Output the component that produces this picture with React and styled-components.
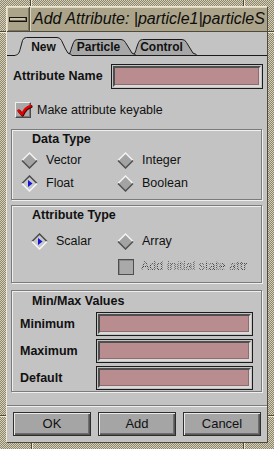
import React from 'react';
import styled, { createGlobalStyle } from 'styled-components';

const Global = createGlobalStyle`
  html, body { margin: 0; padding: 0; background: #b3ab92; }
  body { font-family: "Liberation Sans", Arial, Helvetica, sans-serif; color: #111; }
  * { box-sizing: border-box; }
`;

const Window = styled.div`
  position: relative;
  width: 274px;
  height: 449px;
  padding: 6px;
  background-color: #b3ab92;
  background-image: repeating-conic-gradient(#8e8770 0% 25%, #d6cfb7 0% 50%);
  background-size: 2px 2px;
  display: flex;
`;

const Notch = styled.div`
  position: absolute;
  ${p => p.$side === 'top' && `top: 0; left: ${p.$at}px; width: 2px; height: 6px;`}
  ${p => p.$side === 'bottom' && `bottom: 0; left: ${p.$at}px; width: 2px; height: 6px;`}
  ${p => p.$side === 'left' && `left: 0; top: ${p.$at}px; width: 6px; height: 2px;`}
  ${p => p.$side === 'right' && `right: 0; top: ${p.$at}px; width: 6px; height: 2px;`}
  background: ${p => (p.$side === 'top' || p.$side === 'bottom')
    ? 'linear-gradient(to right, #4e4a3c 50%, #eee8d4 50%)'
    : 'linear-gradient(to bottom, #4e4a3c 50%, #eee8d4 50%)'};
`;

const Inner = styled.div`
  flex: 1;
  min-width: 0;
  display: flex;
  flex-direction: column;
  border: 1px solid;
  border-color: #eee8d4 #4e4a3c #4e4a3c #eee8d4;
`;

const TitleBar = styled.div`
  height: 25px;
  flex: none;
  display: flex;
  background: #aba38a;
  border-bottom: 1px solid #4e4a3c;
`;

const MenuButton = styled.div`
  width: 23px;
  display: flex;
  align-items: center;
  justify-content: center;
  border-right: 1px solid #4e4a3c;
  box-shadow: inset 1px 1px 0 #ddd6bd, inset -1px -1px 0 #7a7460;
`;

const MenuBar = styled.div`
  width: 18px;
  height: 5px;
  border: 1px solid #16150f;
  background: #c9c2a8;
  box-shadow: inset -1px -1px 0 #6f6a57;
`;

const TitleText = styled.div`
  flex: 1;
  min-width: 0;
  padding-left: 3px;
  font-size: 16px;
  font-style: italic;
  line-height: 23px;
  white-space: nowrap;
  overflow: hidden;
  color: #0d0d0a;
  box-shadow: inset 1px 1px 0 #ddd6bd;
`;

const Client = styled.div`
  flex: 1;
  display: flex;
  flex-direction: column;
  background: #c3c3c3;
`;

const TabStrip = styled.div`
  display: flex;
  flex: none;
  height: 19px;
  margin-top: 5px;
  padding-left: 8px;
  border-bottom: 1px solid #1a1a1a;
`;

const TabBox = styled.div`
  position: relative;
  flex: none;
  width: ${p => p.$w}px;
  height: ${p => (p.$active ? 19 : 18)}px;
  margin-left: ${p => p.$ml || 0}px;
  margin-bottom: ${p => (p.$active ? -1 : 0)}px;
  z-index: ${p => p.$z};
  display: flex;
  align-items: flex-end;
  justify-content: center;
  padding-bottom: ${p => (p.$active ? 2 : 1)}px;
  padding-right: ${p => (p.$active ? 0 : 5)}px;
`;

const TabShape = styled.svg`
  position: absolute;
  left: 0;
  top: 0;
`;

const TabLabel = styled.span`
  position: relative;
  font-size: 12px;
  font-weight: bold;
  line-height: 14px;
  color: #111;
`;

function Tab({ label, w, active, ml, z }) {
  const h = active ? 19 : 18;
  const t = active ? 0 : 2;
  const hb = 18;
  const edge = `M0.5 ${hb} C3.5 ${hb} 4.5 ${hb - 3} 5.5 ${hb - 7} L7.5 ${t + 3.5} Q8.5 ${t + 0.5} 11.5 ${t + 0.5} L${w - 15} ${t + 0.5} Q${w - 12} ${t + 0.5} ${w - 10.5} ${t + 3.5} L${w - 6.5} ${hb - 6} Q${w - 4.5} ${hb - 0.5} ${w - 0.5} ${hb - 0.5}`;
  const fill = `${edge} L${w - 0.5} ${h} L0.5 ${h} Z`;
  return (
    <TabBox $w={w} $active={active} $ml={ml} $z={z}>
      <TabShape width={w} height={h} viewBox={`0 0 ${w} ${h}`}>
        <path d={fill} fill={active ? '#c3c3c3' : '#a7a7a7'} />
        <path d={edge} fill="none" stroke="#1a1a1a" strokeWidth="1" />
      </TabShape>
      <TabLabel>{label}</TabLabel>
    </TabBox>
  );
}

const Panel = styled.div`
  display: flex;
  flex-direction: column;
  padding: 0 5px 0 4px;
`;

const NameRow = styled.div`
  margin-top: 8px;
  height: 25px;
  display: flex;
  align-items: center;
  justify-content: space-between;
  padding-left: 2px;
  margin-right: -1px;
`;

const Label = styled.span`
  font-size: 12.5px;
  font-weight: ${p => (p.$bold ? 'bold' : 'normal')};
  line-height: 15px;
  white-space: nowrap;
`;

const Field = styled.div`
  width: ${p => p.$w}px;
  height: ${p => p.$h}px;
  border: 1px solid #1c1c1c;
  padding: 1px;
  background: #c3c3c3;
`;

const FieldInner = styled.div`
  width: 100%;
  height: 100%;
  background: #b98c8f;
  border: 2px solid;
  border-color: #4f4f4f #dadada #dadada #4f4f4f;
  box-shadow: inset -1px -1px 0 #8e6c6e;
`;

const TextField = ({ w, h }) => (
  <Field $w={w} $h={h}>
    <FieldInner />
  </Field>
);

const CheckRow = styled.div`
  margin-top: 13px;
  height: 16px;
  display: flex;
  align-items: center;
  gap: 6px;
  padding-left: 4px;
`;

const CheckBox = styled.div`
  width: 16px;
  height: 16px;
  flex: none;
  background: #a9a9a9;
  border: 1px solid;
  border-color: #efefef #4a4a4a #4a4a4a #efefef;
  box-shadow: inset -1px -1px 0 #7a7a7a;
  position: relative;
`;

const CheckMark = styled.svg`
  position: absolute;
  left: -1px;
  top: -1px;
`;

const DisabledBox = styled.div`
  width: 16px;
  height: 16px;
  flex: none;
  background: #a9a9a9;
  border: 1px solid #4e4e4e;
  box-shadow: inset 1px 1px 0 #8a8a8a;
`;

const Stippled = styled.span`
  font-size: 12.5px;
  line-height: 15px;
  white-space: nowrap;
  color: transparent;
  background-image: repeating-conic-gradient(#3e3e3e 0% 25%, transparent 0% 50%);
  background-size: 2px 2px;
  -webkit-background-clip: text;
  background-clip: text;
`;

const Group = styled.div`
  margin-top: ${p => p.$mt}px;
  border: 1px solid #7b7b7b;
  box-shadow: inset 1px 1px 0 #efefef, 1px 1px 0 #efefef;
  padding: ${p => p.$pt}px 0 ${p => p.$pb}px 0;
`;

const GroupTitle = styled.div`
  font-size: 12.5px;
  font-weight: bold;
  line-height: 15px;
  margin-left: 20px;
`;

const RadioGrid = styled.div`
  display: grid;
  grid-template-columns: ${p => p.$col}px 1fr;
  grid-auto-rows: 23px;
  row-gap: ${p => p.$rg || 0}px;
  margin-top: ${p => p.$mt}px;
  padding-left: ${p => p.$pl}px;
`;

const Item = styled.div`
  display: flex;
  align-items: center;
  gap: ${p => p.$gap || 8}px;
  grid-column: ${p => p.$col || 'auto'};
  margin-left: ${p => p.$ml || 0}px;
`;

function Diamond({ on }) {
  return (
    <svg width="17" height="17" viewBox="0 0 17 17">
      <polygon points="8.5,1 16,8.5 8.5,16 1,8.5" fill={on ? '#c8c8c8' : '#a3a3a3'} />
      <polyline points="1,8.5 8.5,1 16,8.5" fill="none" stroke={on ? '#4a4a4a' : '#f2f2f2'} strokeWidth="1.5" />
      <polyline points="1,8.5 8.5,16 16,8.5" fill="none" stroke={on ? '#f6f6f6' : '#505050'} strokeWidth="1.5" />
      {on && <polygon points="7,5 11.5,8.5 7,12" fill="#1414d8" />}
    </svg>
  );
}

const Radio = ({ label, on, col }) => (
  <Item $col={col}>
    <Diamond on={on} />
    <Label>{label}</Label>
  </Item>
);

const FieldGrid = styled.div`
  display: grid;
  grid-template-columns: 76px 157px;
  grid-auto-rows: 24px;
  row-gap: 3px;
  margin-top: 3px;
  padding-left: 8px;
  align-items: center;
`;

const Separator = styled.div`
  margin-top: 13px;
  border-top: 1px solid #7b7b7b;
  border-bottom: 1px solid #efefef;
`;

const ButtonRow = styled.div`
  margin-top: 5px;
  display: grid;
  grid-template-columns: repeat(3, 1fr);
  column-gap: 7px;
  padding: 0 6px;
`;

const Button = styled.button`
  height: 24px;
  margin: 0;
  padding: 0;
  font-family: "Liberation Sans", Arial, sans-serif;
  font-size: 13px;
  color: #111;
  background: #a5a5a5;
  border: 1px solid #2e2e2e;
  box-shadow: inset 1px 1px 0 #e9e9e9, inset -1px -1px 0 #575757, inset -2px -2px 0 #6e6e6e;
  line-height: 22px;
`;

export default function App() {
  return (
    <>
      <Global />
      <Window>
        <Notch $side="top" $at={30} />
        <Notch $side="top" $at={243} />
        <Notch $side="bottom" $at={31} />
        <Notch $side="bottom" $at={243} />
        <Notch $side="left" $at={31} />
        <Notch $side="left" $at={415} />
        <Notch $side="right" $at={31} />
        <Notch $side="right" $at={415} />
        <Inner>
          <TitleBar>
            <MenuButton><MenuBar /></MenuButton>
            <TitleText>Add Attribute: |particle1|particleS</TitleText>
          </TitleBar>
          <Client>
            <TabStrip>
              <Tab label="New" w={57} active z={3} />
              <Tab label="Particle" w={70} ml={-6} z={2} />
              <Tab label="Control" w={66} ml={-5} z={1} />
            </TabStrip>
            <Panel>
              <NameRow>
                <Label $bold>Attribute Name</Label>
                <TextField w={152} h={25} />
              </NameRow>
              <CheckRow>
                <CheckBox>
                  <CheckMark width="18" height="18" viewBox="0 0 18 18">
                    <path d="M3.5 8.5 L7 12.5 C9 8 11.5 5 15.5 4" fill="none" stroke="#3a0000" strokeWidth="3" strokeLinecap="round" strokeLinejoin="round" transform="translate(0.6 0.6)" />
                    <path d="M3.5 8.5 L7 12.5 C9 8 11.5 5 15.5 4" fill="none" stroke="#e80000" strokeWidth="2.4" strokeLinecap="round" strokeLinejoin="round" />
                  </CheckMark>
                </CheckBox>
                <Label>Make attribute keyable</Label>
              </CheckRow>

              <Group $mt={11} $pt={2} $pb={4}>
                <GroupTitle>Data Type</GroupTitle>
                <RadioGrid $col={96} $mt={2} $pl={9}>
                  <Radio label="Vector" />
                  <Radio label="Integer" />
                  <Radio label="Float" on />
                  <Radio label="Boolean" />
                </RadioGrid>
              </Group>

              <Group $mt={5} $pt={2} $pb={4}>
                <GroupTitle>Attribute Type</GroupTitle>
                <RadioGrid $col={86} $mt={7} $pl={19} $rg={2}>
                  <Radio label="Scalar" on />
                  <Radio label="Array" />
                  <Item $col="2" $ml={1} $gap={7}>
                    <DisabledBox />
                    <Stippled>Add initial state attr</Stippled>
                  </Item>
                </RadioGrid>
              </Group>

              <Group $mt={7} $pt={3} $pb={1}>
                <GroupTitle>Min/Max Values</GroupTitle>
                <FieldGrid>
                  <Label $bold>Minimum</Label>
                  <TextField w={157} h={24} />
                  <Label $bold>Maximum</Label>
                  <TextField w={157} h={24} />
                  <Label $bold>Default</Label>
                  <TextField w={157} h={24} />
                </FieldGrid>
              </Group>
            </Panel>
            <Separator />
            <ButtonRow>
              <Button>OK</Button>
              <Button>Add</Button>
              <Button>Cancel</Button>
            </ButtonRow>
          </Client>
        </Inner>
      </Window>
    </>
  );
}
